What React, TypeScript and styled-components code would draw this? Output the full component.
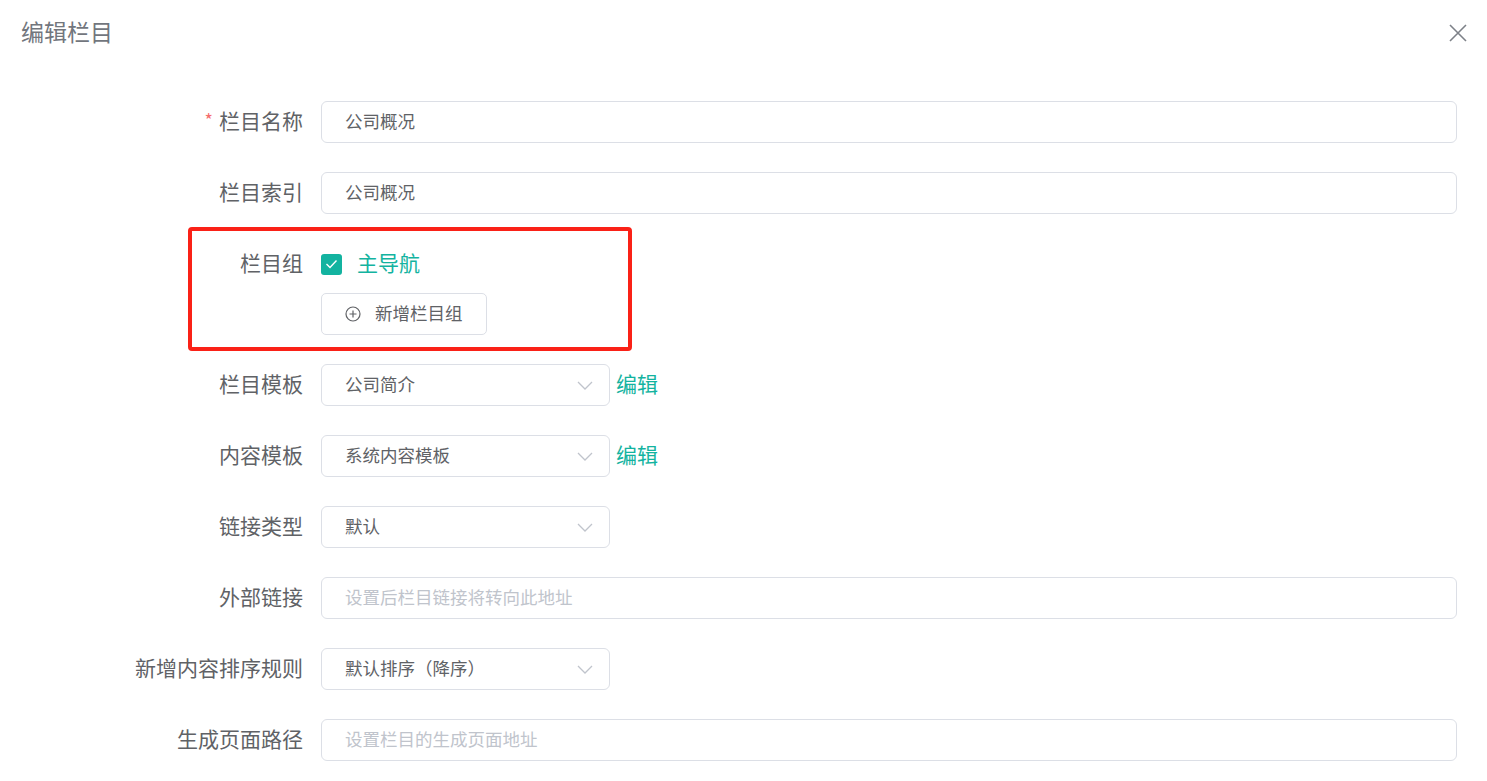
import React from "react"
import styled, { createGlobalStyle } from "styled-components"

const GlobalStyle = createGlobalStyle`
  html, body {
    margin: 0;
    padding: 0;
    background: #fff;
  }
  body {
    font-family: "Noto Sans CJK SC", "Noto Sans", sans-serif;
    color: #606266;
  }
  * { box-sizing: border-box; }
`

const teal = "#13b3a0"

const Dialog = styled.div`
  width: 1487px;
  height: 781px;
  overflow: hidden;
  background: #fff;
`

const Header = styled.div`
  display: flex;
  align-items: center;
  justify-content: space-between;
  height: 66px;
  padding: 0 20px 0 21px;
`

const Title = styled.span`
  font-size: 23px;
  color: #72767d;
  line-height: 1;
  margin-bottom: 4px;
`

const CloseButton = styled.button`
  display: flex;
  align-items: center;
  justify-content: center;
  width: 18px;
  height: 18px;
  padding: 0;
  border: 0;
  background: none;
  cursor: pointer;
`

const Body = styled.div`
  padding: 35px 30px 0 0;
`

const FormItem = styled.div`
  position: relative;
  display: flex;
  align-items: flex-start;
  margin-bottom: 29px;
`

const Label = styled.label`
  flex: 0 0 321px;
  display: flex;
  align-items: center;
  justify-content: flex-end;
  height: 42px;
  padding: 0 18px 3px 0;
  font-size: 21px;
  line-height: 1;
  color: #606266;
  white-space: nowrap;
`

const Required = styled.span`
  color: #f56c6c;
  font-size: 18px;
  line-height: 1;
  margin-right: 6px;
  margin-bottom: 3px;
`

const Content = styled.div`
  flex: 1;
  display: flex;
  flex-direction: column;
  align-items: flex-start;
`

const InlineRow = styled.div`
  display: flex;
  align-items: center;
`

const Input = styled.input`
  width: 100%;
  height: 42px;
  padding: 0 23px 3px;
  border: 1px solid #dcdfe6;
  border-radius: 6px;
  font-family: inherit;
  font-size: 17.5px;
  color: #606266;
  outline: none;
  background: #fff;

  &::placeholder {
    color: #c0c4cc;
  }
`

const SelectBox = styled.div`
  display: flex;
  align-items: center;
  justify-content: space-between;
  width: 289px;
  height: 42px;
  padding: 0 16px 0 23px;
  border: 1px solid #dcdfe6;
  border-radius: 6px;
  font-size: 17.5px;
  color: #606266;
  background: #fff;
`

const SelectText = styled.span`
  line-height: 1;
  margin-bottom: 3px;
`

const EditLink = styled.a`
  margin: 0 0 3px 6px;
  font-size: 21px;
  line-height: 1;
  color: ${teal};
  text-decoration: none;
  cursor: pointer;
`

const CheckRow = styled.label`
  display: flex;
  align-items: center;
  height: 42px;
  cursor: pointer;
`

const CheckBox = styled.span`
  display: flex;
  align-items: center;
  justify-content: center;
  width: 21px;
  height: 21px;
  border-radius: 3px;
  background: ${teal};
`

const CheckText = styled.span`
  margin: 0 0 3px 15px;
  font-size: 21px;
  line-height: 1;
  color: ${teal};
`

const AddButton = styled.button`
  display: flex;
  align-items: center;
  gap: 14px;
  height: 42px;
  margin-top: 8px;
  padding: 0 23px 0 23px;
  border: 1px solid #dcdfe6;
  border-radius: 5px;
  background: #fff;
  font-family: inherit;
  font-size: 17.5px;
  color: #606266;
  cursor: pointer;
`

const ButtonText = styled.span`
  line-height: 1;
  margin-bottom: 3px;
`

const Annotation = styled.div`
  position: absolute;
  left: 188px;
  top: -16px;
  width: 444px;
  height: 124px;
  border: 4px solid #fa2117;
  border-radius: 4px;
  pointer-events: none;
`

const Chevron = () => (
  <svg width="16" height="9" viewBox="0 0 16 9">
    <polyline points="1,1 8,8 15,1" fill="none" stroke="#c0c4cc" strokeWidth="1.3" />
  </svg>
)

const Select = ({ value }: { value: string }) => (
  <SelectBox>
    <SelectText>{value}</SelectText>
    <Chevron />
  </SelectBox>
)

export default function App() {
  return (
    <Dialog>
      <GlobalStyle />
      <Header>
        <Title>编辑栏目</Title>
        <CloseButton aria-label="关闭">
          <svg width="18" height="18" viewBox="0 0 18 18">
            <path d="M1 1L17 17M17 1L1 17" stroke="#7d8188" strokeWidth="1.6" />
          </svg>
        </CloseButton>
      </Header>
      <Body>
        <FormItem>
          <Label>
            <Required>*</Required>栏目名称
          </Label>
          <Content>
            <Input defaultValue="公司概况" />
          </Content>
        </FormItem>
        <FormItem>
          <Label>栏目索引</Label>
          <Content>
            <Input defaultValue="公司概况" />
          </Content>
        </FormItem>
        <FormItem>
          <Label>栏目组</Label>
          <Content>
            <CheckRow>
              <CheckBox>
                <svg width="13" height="10" viewBox="0 0 13 10">
                  <polyline points="1.5,5 5,8.5 11.5,1.5" fill="none" stroke="#fff" strokeWidth="1.4" />
                </svg>
              </CheckBox>
              <CheckText>主导航</CheckText>
            </CheckRow>
            <AddButton>
              <svg width="16" height="16" viewBox="0 0 16 16">
                <circle cx="8" cy="8" r="7" fill="none" stroke="#606266" strokeWidth="1.2" />
                <path d="M8 4.5V11.5M4.5 8H11.5" stroke="#606266" strokeWidth="1.2" />
              </svg>
              <ButtonText>新增栏目组</ButtonText>
            </AddButton>
          </Content>
          <Annotation />
        </FormItem>
        <FormItem>
          <Label>栏目模板</Label>
          <InlineRow>
            <Select value="公司简介" />
            <EditLink>编辑</EditLink>
          </InlineRow>
        </FormItem>
        <FormItem>
          <Label>内容模板</Label>
          <InlineRow>
            <Select value="系统内容模板" />
            <EditLink>编辑</EditLink>
          </InlineRow>
        </FormItem>
        <FormItem>
          <Label>链接类型</Label>
          <InlineRow>
            <Select value="默认" />
          </InlineRow>
        </FormItem>
        <FormItem>
          <Label>外部链接</Label>
          <Content>
            <Input placeholder="设置后栏目链接将转向此地址" />
          </Content>
        </FormItem>
        <FormItem>
          <Label>新增内容排序规则</Label>
          <InlineRow>
            <Select value="默认排序（降序）" />
          </InlineRow>
        </FormItem>
        <FormItem>
          <Label>生成页面路径</Label>
          <Content>
            <Input placeholder="设置栏目的生成页面地址" />
          </Content>
        </FormItem>
      </Body>
    </Dialog>
  )
}
